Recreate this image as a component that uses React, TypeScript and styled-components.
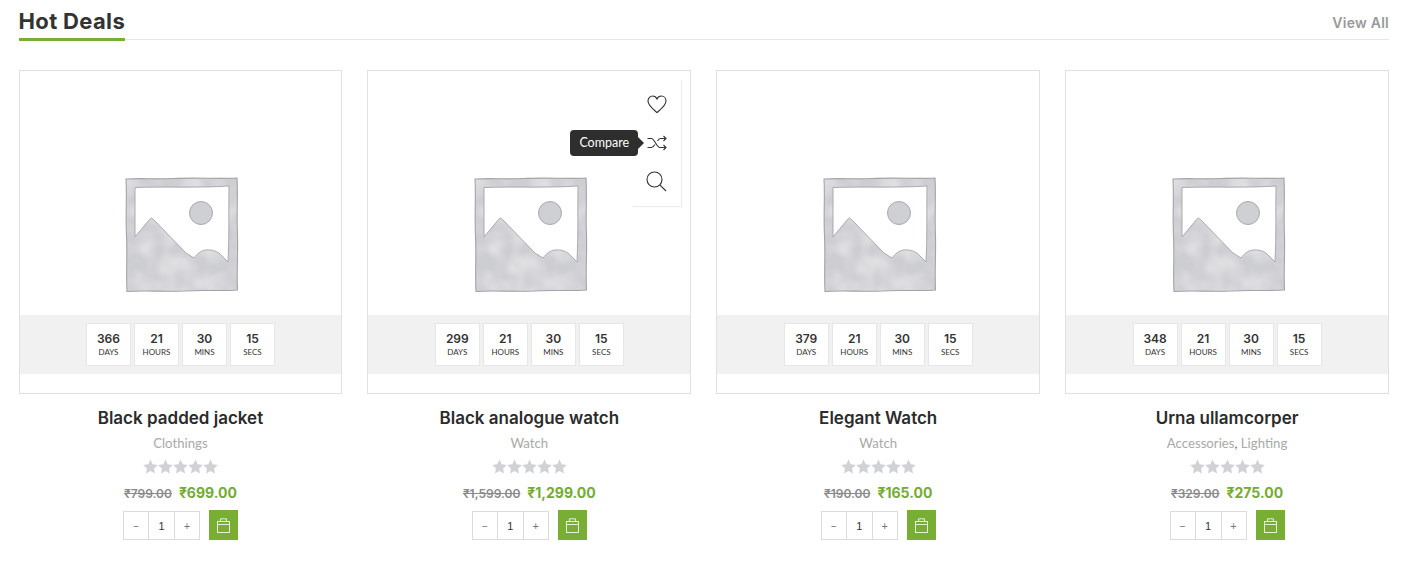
import { createGlobalStyle, styled } from 'styled-components';

const GlobalStyle = createGlobalStyle`
  html, body { margin: 0; padding: 0; background: #fff; }
  body { font-family: "Lato", "Liberation Sans", sans-serif; }
`;

const HEAD_FONT = `"Inter", "Liberation Sans", sans-serif`;

const products = [
  { name: 'Black padded jacket', cats: ['Clothings'], oldPrice: '₹799.00', price: '₹699.00', days: 366 },
  { name: 'Black analogue watch', cats: ['Watch'], oldPrice: '₹1,599.00', price: '₹1,299.00', days: 299, hovered: true },
  { name: 'Elegant Watch', cats: ['Watch'], oldPrice: '₹190.00', price: '₹165.00', days: 379 },
  { name: 'Urna ullamcorper', cats: ['Accessories', 'Lighting'], oldPrice: '₹329.00', price: '₹275.00', days: 348 },
];

function Placeholder() {
  return (
    <svg width="116" height="118" viewBox="0 0 116 118">
      <defs>
        <filter id="mottle" x="0" y="0" width="100%" height="100%">
          <feTurbulence type="fractalNoise" baseFrequency="0.05" numOctaves="2" seed="4" result="noise" />
          <feColorMatrix
            in="noise"
            type="matrix"
            values="0 0 0 0 1  0 0 0 0 1  0 0 0 0 1  0.7 0 0 0 -0.22"
            result="light"
          />
          <feComposite in="light" in2="SourceAlpha" operator="in" result="clipped" />
          <feMerge>
            <feMergeNode in="SourceGraphic" />
            <feMergeNode in="clipped" />
          </feMerge>
        </filter>
      </defs>
      <path
        d="M2 3 C20 2 30 3.5 50 2.5 C75 1.5 95 3 113 2 C114 20 112.5 40 113.5 60 C114 80 112.5 95 113.5 114 C95 115.5 80 113.5 60 115 C40 116 20 114 3 115.5 C2 95 3.5 80 2.5 60 C1.5 40 3 20 2 3 Z"
        fill="#cdced2"
        filter="url(#mottle)"
      />
      <path
        d="M2 3 C20 2 30 3.5 50 2.5 C75 1.5 95 3 113 2 C114 20 112.5 40 113.5 60 C114 80 112.5 95 113.5 114 C95 115.5 80 113.5 60 115 C40 116 20 114 3 115.5 C2 95 3.5 80 2.5 60 C1.5 40 3 20 2 3 Z"
        fill="none"
        stroke="#a2a3a8"
        strokeWidth="1.1"
      />
      <path
        d="M11 11.5 C40 10.5 75 12 105 10 C104.5 35 105.5 60 104 86 L98 80 C94 75 88 73.5 82 74 C77 74.5 73 78 70 82 L62 77 L30 44 C28 42 27 41.5 25.5 43.5 L11 61 Z"
        fill="#fff"
        stroke="#a2a3a8"
        strokeWidth="0.9"
      />
      <circle cx="77" cy="37" r="11.5" fill="#cfd0d4" stroke="#a2a3a8" strokeWidth="0.9" />
    </svg>
  );
}

function Star() {
  return (
    <svg width="15" height="15" viewBox="0 0 24 24">
      <path d="M12 0.8l3.5 7.6 8.2 1-6 5.7 1.6 8.2L12 19.2l-7.3 4.1 1.6-8.2-6-5.7 8.2-1z" fill="#d0d2d5" />
    </svg>
  );
}

function HeartIcon() {
  return (
    <svg width="20" height="19" viewBox="0 0 20 19" fill="none" stroke="#333" strokeWidth="1.1">
      <path d="M10 17.6 C7 14.8 1 10.6 1 6 C1 3 3.2 1 5.6 1 C7.6 1 9.2 2.2 10 4 C10.8 2.2 12.4 1 14.4 1 C16.8 1 19 3 19 6 C19 10.6 13 14.8 10 17.6 Z" />
    </svg>
  );
}

function ShuffleIcon() {
  return (
    <svg width="20" height="16" viewBox="0 0 20 16" fill="none" stroke="#333" strokeWidth="1.1">
      <path d="M0.5 3.5 H4.5 C7.5 3.5 9.5 12.5 13 12.5 H19" />
      <path d="M0.5 12.5 H4.5 C6 12.5 7 11 8 9.5 M10.5 6 C11.2 4.8 12 3.5 13.5 3.5 H19" />
      <path d="M16.5 1 L19 3.5 L16.5 6 M16.5 10 L19 12.5 L16.5 15" />
    </svg>
  );
}

function SearchIcon() {
  return (
    <svg width="21" height="21" viewBox="0 0 21 21" fill="none" stroke="#333" strokeWidth="1.1">
      <circle cx="8.5" cy="8.5" r="7.5" />
      <path d="M13.8 13.8 L20 20" />
    </svg>
  );
}

function BagIcon() {
  return (
    <svg width="13" height="15" viewBox="0 0 13 15" fill="none" stroke="#fff" strokeWidth="0.9" opacity="0.9">
      <rect x="0.5" y="3.5" width="12" height="11" />
      <path d="M3.5 3.5 V0.8 H9.5 V3.5 M0.5 6.5 H12.5" />
    </svg>
  );
}

export default function App() {
  return (
    <>
      <GlobalStyle />
      <Page>
        <Header>
          <Title>Hot Deals</Title>
          <ViewAll>View All</ViewAll>
        </Header>
        <Grid>
          {products.map((p) => (
            <Product key={p.name}>
              <Thumb>
                <Placeholder />
                {p.hovered && (
                  <Actions>
                    <ActionBtn><HeartIcon /></ActionBtn>
                    <ActionBtn>
                      <ShuffleIcon />
                      <Tooltip>Compare</Tooltip>
                    </ActionBtn>
                    <ActionBtn><SearchIcon /></ActionBtn>
                  </Actions>
                )}
                <Countdown>
                  <TimeBox><TimeNum>{p.days}</TimeNum><TimeLabel>DAYS</TimeLabel></TimeBox>
                  <TimeBox><TimeNum>21</TimeNum><TimeLabel>HOURS</TimeLabel></TimeBox>
                  <TimeBox><TimeNum>30</TimeNum><TimeLabel>MINS</TimeLabel></TimeBox>
                  <TimeBox><TimeNum>15</TimeNum><TimeLabel>SECS</TimeLabel></TimeBox>
                </Countdown>
              </Thumb>
              <Name>{p.name}</Name>
              <Category>
                {p.cats.map((c, i) => (
                  <span key={c}>
                    {i > 0 && <Comma>, </Comma>}
                    {c}
                  </span>
                ))}
              </Category>
              <Stars>{[0, 1, 2, 3, 4].map((i) => <Star key={i} />)}</Stars>
              <Prices>
                <OldPrice>{p.oldPrice}</OldPrice>
                <Price>{p.price}</Price>
              </Prices>
              <CartRow>
                <Qty>
                  <QtyBtn>−</QtyBtn>
                  <QtyValue>1</QtyValue>
                  <QtyBtn>+</QtyBtn>
                </Qty>
                <CartBtn><BagIcon /></CartBtn>
              </CartRow>
            </Product>
          ))}
        </Grid>
      </Page>
    </>
  );
}

const Page = styled.div`
  width: 1370.5px;
  margin-left: 18.5px;
  height: 568px;
  overflow: hidden;
`;

const Header = styled.div`
  display: flex;
  justify-content: space-between;
  align-items: flex-end;
  height: 39px;
  border-bottom: 1px solid #e6e6e6;
`;

const Title = styled.h2`
  margin: 0 0 -2px;
  height: 41px;
  box-sizing: border-box;
  border-bottom: 3px solid #77ae33;
  font-family: ${HEAD_FONT};
  font-size: 22px;
  font-weight: 700;
  line-height: 43px;
  letter-spacing: 0.35px;
  color: #333;
`;

const ViewAll = styled.a`
  height: 24px;
  font-family: ${HEAD_FONT};
  font-size: 14px;
  font-weight: 600;
  line-height: 16px;
  letter-spacing: 0.25px;
  color: #999;
`;

const Grid = styled.div`
  display: grid;
  grid-template-columns: repeat(4, 1fr);
  gap: 25px;
  margin-top: 30px;
`;

const Product = styled.div`
  display: flex;
  flex-direction: column;
  align-items: center;
`;

const Thumb = styled.div`
  position: relative;
  width: 100%;
  height: 324px;
  box-sizing: border-box;
  border: 1px solid #e1e1e1;
  display: flex;
  justify-content: center;
  padding-top: 105px;
  padding-left: 3px;
`;

const Actions = styled.div`
  position: absolute;
  top: 9px;
  right: 9px;
  width: 49px;
  height: 126px;
  box-sizing: border-box;
  padding-top: 5px;
  background: #fff;
  box-shadow: 1px 1px 1px #ececec;
  display: flex;
  flex-direction: column;
  align-items: center;
`;

const ActionBtn = styled.div`
  position: relative;
  height: 38.5px;
  display: flex;
  align-items: center;
  justify-content: center;
  width: 100%;
`;

const Tooltip = styled.div`
  position: absolute;
  right: 43px;
  top: 50%;
  transform: translateY(-50%);
  width: 68px;
  height: 26px;
  border-radius: 4px;
  background: #2e2e2e;
  color: #fff;
  font-size: 12.5px;
  line-height: 26px;
  text-align: center;

  &::after {
    content: '';
    position: absolute;
    right: -6px;
    top: 7px;
    border-left: 6px solid #2e2e2e;
    border-top: 6px solid transparent;
    border-bottom: 6px solid transparent;
  }
`;

const Countdown = styled.div`
  position: absolute;
  left: 0;
  right: 0;
  bottom: 19px;
  height: 59px;
  background: #f1f1f1;
  display: flex;
  justify-content: center;
  align-items: center;
  gap: 3px;
`;

const TimeBox = styled.div`
  width: 45px;
  height: 43px;
  box-sizing: border-box;
  background: #fff;
  border: 1px solid #e6e6e6;
  display: flex;
  flex-direction: column;
  align-items: center;
  padding-top: 7px;
`;

const TimeNum = styled.div`
  font-family: ${HEAD_FONT};
  font-size: 12px;
  font-weight: 600;
  line-height: 15px;
  color: #333;
`;

const TimeLabel = styled.div`
  font-family: "Lato", sans-serif;
  font-size: 8px;
  line-height: 13px;
  color: #333;
`;

const Name = styled.div`
  margin-top: 14px;
  font-family: ${HEAD_FONT};
  font-size: 17px;
  font-weight: 600;
  line-height: 20px;
  color: #2b2b2b;
`;

const Category = styled.div`
  margin-top: 7px;
  font-size: 13.2px;
  line-height: 17px;
  color: #a9a9a9;
`;

const Comma = styled.span`
  color: #666;
`;

const Stars = styled.div`
  display: flex;
  margin-top: 7px;
  height: 15px;
`;

const Prices = styled.div`
  margin-top: 10px;
  display: flex;
  align-items: baseline;
  gap: 7px;
  font-family: ${HEAD_FONT};
  line-height: 18px;
`;

const OldPrice = styled.span`
  font-size: 12px;
  font-weight: 600;
  color: #8a8a8a;
  text-decoration: line-through;
`;

const Price = styled.span`
  font-size: 14px;
  font-weight: 700;
  color: #74ab32;
`;

const CartRow = styled.div`
  display: flex;
  gap: 9px;
  margin-top: 7px;
`;

const Qty = styled.div`
  display: flex;
  height: 29px;
  margin-top: 1px;
  box-sizing: border-box;
  border: 1px solid #dcdcdc;
`;

const QtyBtn = styled.div`
  width: 24px;
  display: flex;
  align-items: center;
  justify-content: center;
  font-size: 11px;
  color: #777;
`;

const QtyValue = styled.div`
  width: 25px;
  border-left: 1px solid #dcdcdc;
  border-right: 1px solid #dcdcdc;
  display: flex;
  align-items: center;
  justify-content: center;
  font-family: "Liberation Sans", sans-serif;
  font-size: 11px;
  color: #333;
`;

const CartBtn = styled.div`
  width: 29px;
  height: 30px;
  background: #77ae33;
  display: flex;
  align-items: center;
  justify-content: center;
`;
